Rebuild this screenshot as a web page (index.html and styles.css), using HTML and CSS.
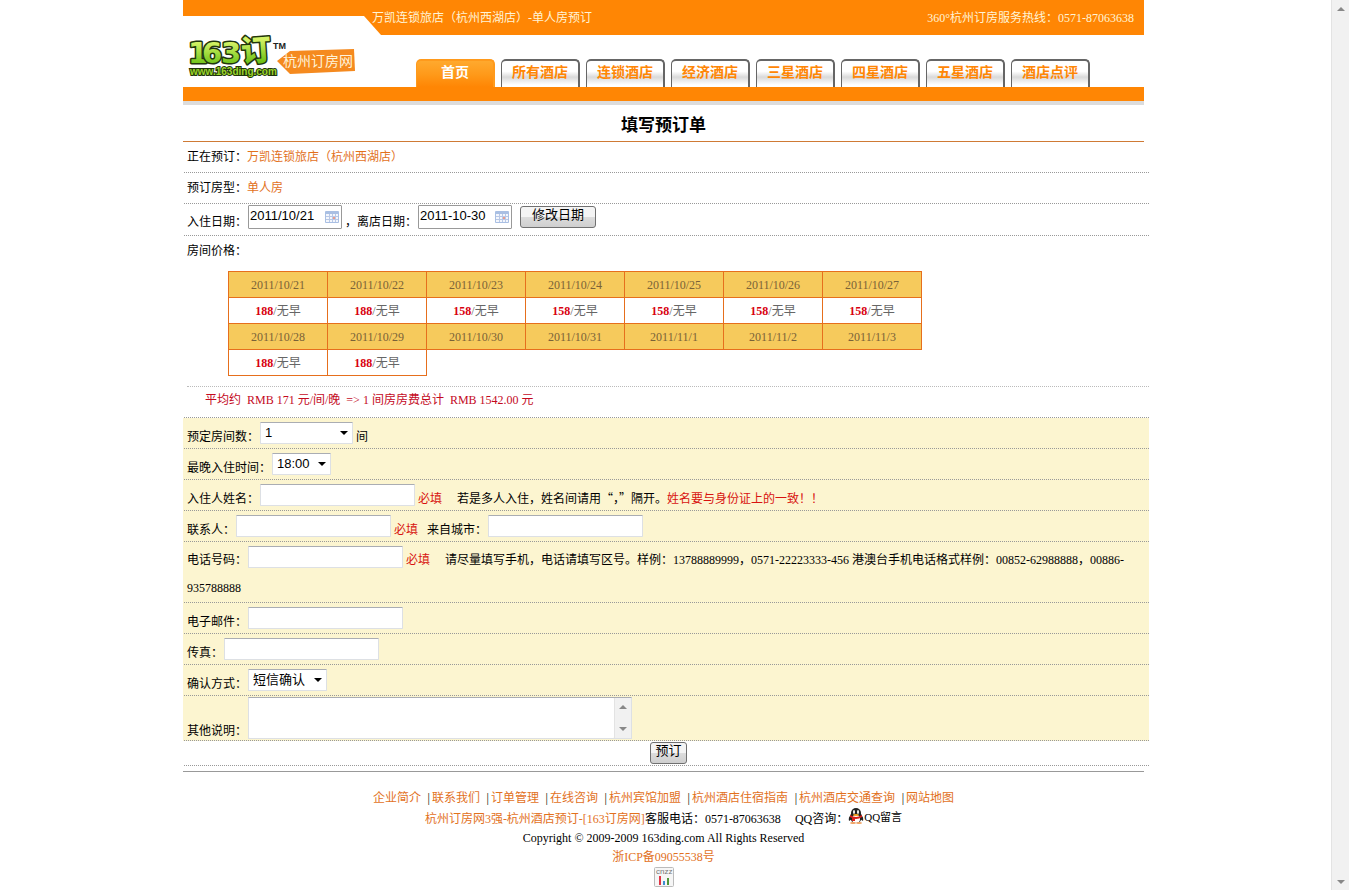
FILE: index.html
```html
<!DOCTYPE html>
<html lang="zh-CN">
<head>
<meta charset="utf-8">
<title>万凯连锁旅店（杭州西湖店）-单人房预订</title>
<link rel="stylesheet" href="styles.css">
</head>
<body>
<div class="viewport">
<div class="page">
  <header>
    <div class="topbar">
      <span class="notch"></span>
      <span class="crumb">万凯连锁旅店（杭州西湖店）-单人房预订</span>
      <span class="hotline">360°杭州订房服务热线：0571-87063638</span>
    </div>
    <div class="brandbar">
      <a class="logo" href="#" aria-label="163订 杭州订房网">
        <svg width="172" height="50" viewBox="0 0 172 50">
          <defs><linearGradient id="leaf" x1="0" y1="0" x2="0" y2="1"><stop offset="0.2" stop-color="#d3f264"/><stop offset="0.9" stop-color="#62bd10"/></linearGradient></defs>
          <g class="logo-main" fill="url(#leaf)" stroke="#22350c" stroke-width="3" paint-order="stroke" stroke-linejoin="round">
            <text x="-2 12 31" y="32" font-size="29">163</text>
            <text x="51" y="30" font-size="30" transform="rotate(-4 66 20)">订</text>
          </g>
          <text class="logo-tm" x="83" y="18">TM</text>
          <text class="logo-url" x="0" y="44">www.163ding.com</text>
          <path d="M87 30L100 20L164 18L165 40L100 43Z" fill="#f58a1f"/>
          <text class="logo-tag" x="93" y="35">杭州订房网</text>
        </svg>
      </a>
      <nav class="tabs">
        <a class="tab active" href="#">首页</a>
        <a class="tab" href="#">所有酒店</a>
        <a class="tab" href="#">连锁酒店</a>
        <a class="tab" href="#">经济酒店</a>
        <a class="tab" href="#">三星酒店</a>
        <a class="tab" href="#">四星酒店</a>
        <a class="tab" href="#">五星酒店</a>
        <a class="tab" href="#">酒店点评</a>
      </nav>
    </div>
    <div class="stripe"></div>
  </header>

  <main>
    <h1>填写预订单</h1>
    <form class="order">
      <div class="row plain">正在预订：<a href="#">万凯连锁旅店（杭州西湖店）</a></div>
      <div class="row plain">预订房型：<a href="#">单人房</a></div>
      <div class="row dates"><label for="in">入住日期：</label><input class="date" id="in" type="text" value="2011/10/21">，<label for="out">离店日期：</label><input class="date" id="out" type="text" value="2011-10-30"><button class="btn change" type="button">修改日期</button></div>
      <div class="row-open">房间价格：</div>
      <div class="prices">
        <table>
          <tr class="days"><td>2011/10/21</td><td>2011/10/22</td><td>2011/10/23</td><td>2011/10/24</td><td>2011/10/25</td><td>2011/10/26</td><td>2011/10/27</td></tr>
          <tr><td><b>188</b>/无早</td><td><b>188</b>/无早</td><td><b>158</b>/无早</td><td><b>158</b>/无早</td><td><b>158</b>/无早</td><td><b>158</b>/无早</td><td><b>158</b>/无早</td></tr>
          <tr class="days"><td>2011/10/28</td><td>2011/10/29</td><td>2011/10/30</td><td>2011/10/31</td><td>2011/11/1</td><td>2011/11/2</td><td>2011/11/3</td></tr>
          <tr><td><b>188</b>/无早</td><td><b>188</b>/无早</td></tr>
        </table>
      </div>
      <div class="row total">平均约&nbsp; RMB 171 元/间/晚&nbsp; =&gt; 1 间房房费总计&nbsp; RMB 1542.00 元</div>

      <div class="fields">
        <div class="row"><label for="rooms">预定房间数：</label><select class="rooms" id="rooms"><option>1</option></select>间</div>
        <div class="row"><label for="late">最晚入住时间：</label><select class="late" id="late"><option>18:00</option></select></div>
        <div class="row"><label for="guest">入住人姓名：</label><input class="text" id="guest" type="text"><em>必填</em><span class="hint">若是多人入住，姓名间请用<span class="quoted">“，”</span>隔开。<em>姓名要与身份证上的一致！！</em></span></div>
        <div class="row"><label for="contact">联系人：</label><input class="text" id="contact" type="text"><em>必填</em><label class="second" for="city">来自城市：</label><input class="text" id="city" type="text"></div>
        <div class="row tall"><label for="phone">电话号码：</label><input class="text" id="phone" type="text"><em>必填</em><span class="hint">请尽量填写手机，电话请填写区号。样例：13788889999，0571-22223333-456 港澳台手机电话格式样例：00852-62988888，00886-935788888</span></div>
        <div class="row"><label for="mail">电子邮件：</label><input class="text" id="mail" type="text"></div>
        <div class="row"><label for="fax">传真：</label><input class="text" id="fax" type="text"></div>
        <div class="row"><label for="confirm">确认方式：</label><select class="confirm" id="confirm"><option>短信确认</option></select></div>
        <div class="row notes"><label for="notes">其他说明：</label><span class="notes-box"><textarea id="notes"></textarea><span class="scroll"><svg width="8" height="4"><path d="M0 4L4 0L8 4Z" fill="#888"/></svg><svg width="8" height="4"><path d="M0 0L4 4L8 0Z" fill="#888"/></svg></span></span></div>
      </div>
      <div class="row submit"><button class="btn" type="submit">预订</button></div>
    </form>
  </main>

  <footer>
    <p class="links"><a href="#">企业简介</a><i>|</i><a href="#">联系我们</a><i>|</i><a href="#">订单管理</a><i>|</i><a href="#">在线咨询</a><i>|</i><a href="#">杭州宾馆加盟</a><i>|</i><a href="#">杭州酒店住宿指南</a><i>|</i><a href="#">杭州酒店交通查询</a><i>|</i><a href="#">网站地图</a></p>
    <p class="service"><a href="#">杭州订房网3强-杭州酒店预订-[163订房网]</a><span>客服电话：0571-87063638</span><span class="qq">QQ咨询：</span><a class="qqlink" href="#"><svg width="16" height="16" viewBox="0 0 16 16"><path d="M3 7Q0 9 1 13L4 11Z" fill="#222"/><path d="M13 7Q16 9 15 13L12 11Z" fill="#222"/><ellipse cx="8" cy="9" rx="6" ry="6" fill="#222"/><ellipse cx="8" cy="5" rx="5" ry="5" fill="#222"/><ellipse cx="8" cy="11" rx="4" ry="4" fill="#fff"/><path d="M2 7Q8 11 14 7V9Q8 13 2 9Z" fill="#d8201c"/><path d="M4 9L7 10V13H4Z" fill="#d8201c"/><ellipse cx="6" cy="4" rx="1" ry="2" fill="#fff"/><ellipse cx="10" cy="4" rx="1" ry="2" fill="#fff"/><ellipse cx="8" cy="7" rx="3" ry="1" fill="#f5a21c"/><ellipse cx="5" cy="15" rx="3" ry="1" fill="#f0a060"/><ellipse cx="11" cy="15" rx="3" ry="1" fill="#f0a060"/></svg>QQ留言</a></p>
    <p>Copyright © 2009-2009 163ding.com All Rights Reserved</p>
    <p><a href="#">浙ICP备09055538号</a></p>
    <a class="cnzz" href="#" aria-label="cnzz"><svg width="20" height="20" viewBox="0 0 20 20"><rect x="0.5" y="0.5" width="19" height="19" rx="1" fill="#f6f6f6" stroke="#bbb"/><text x="2" y="7">cnzz</text><path d="M5 9h2v9h-2z" fill="#e03545"/><path d="M9 14h2v4h-2z" fill="#3f8fd0"/><path d="M13 11h2v7h-2z" fill="#4f9638"/></svg></a>
  </footer>
</div>
</div>
<div class="scroll page-scroll"><svg width="8" height="4"><path d="M0 4L4 0L8 4Z" fill="#888"/></svg><svg width="8" height="4"><path d="M0 0L4 4L8 0Z" fill="#888"/></svg></div>
</body>
</html>
```
FILE: styles.css
```css
* { box-sizing: border-box; }

body {
  display: flex;
  min-height: 100vh;
  margin: 0;
  background: #fff;
  color: #000;
  font: 12px "Liberation Serif", "Noto Sans CJK SC", serif;
}

a { color: #e2711d; text-decoration: none; }
em { color: #d8130f; font-style: normal; }

.viewport { flex: 1; padding-right: 4px; }
.page { max-width: 961px; margin: 0 auto; }

.scroll {
  display: flex;
  flex-direction: column;
  align-items: center;
  justify-content: space-between;
  width: 17px;
  padding: 7px 0;
  border-left: 1px solid #e3e3e3;
  background: #f1f1f1;
}
.page-scroll { width: 18px; }

/* Header */
.topbar {
  display: flex;
  height: 35px;
  background: #ff8604;
  color: #fff4d6;
  line-height: 36px;
}
.notch {
  align-self: flex-end;
  width: 198px;
  height: 19px;
  background: #fff;
  clip-path: polygon(0 0, 181px 0, 100% 100%, 0 100%);
}
.crumb { margin-left: -9px; }
.hotline { margin: 0 10px 0 auto; }

.brandbar { position: relative; display: flex; align-items: flex-end; height: 52px; }
.logo { width: 172px; height: 56px; margin-left: 7px; }
.logo svg { display: block; overflow: visible; }
.logo-main { font-family: "DejaVu Sans", "Noto Sans CJK SC", sans-serif; font-weight: 900; }
.logo-tm { font: bold 9px "Liberation Sans", sans-serif; fill: #222; }
.logo-url {
  font: bold 10px "Liberation Sans", sans-serif;
  fill: #9bd62b;
  stroke: #22350c;
  stroke-width: 2px;
  paint-order: stroke;
}
.logo-tag { font: 14px "Noto Sans CJK SC", sans-serif; fill: #fff3d8; }

.tabs { display: flex; gap: 6px; margin-left: 54px; }
.tab {
  width: 79px;
  height: 28px;
  border: solid #666;
  border-width: 2px 2px 0 1px;
  border-radius: 5px 5px 0 0;
  background: linear-gradient(#fff 40%, #d9d9d9 62%, #fff 92%);
  color: #ff8604;
  font-size: 14px;
  font-weight: bold;
  line-height: 23px;
  text-align: center;
}
.tab.active {
  border-color: #ff9a1c;
  background: linear-gradient(#ffa92e, #ff9a1a 50%, #ff8604);
  color: #fff;
}
.stripe { height: 18px; border-bottom: 4px solid #dcdcdc; background: #ff8604; }

/* Order form */
h1 {
  margin: 0;
  padding-top: 5px;
  border-bottom: 1px solid #cf7a35;
  font-size: 17px;
  line-height: 31px;
  text-align: center;
}
.order { margin: 0 -5px 0 1px; }
.row {
  padding: 8px 0 0 3px;
  border-bottom: 1px dotted #999;
  line-height: 22px;
}
.row.plain { padding-top: 0; line-height: 30px; }
.row.dates { padding-top: 5px; line-height: 26px; }
.row-open { padding-left: 3px; line-height: 30px; }
.row.total { padding: 0 0 4px 21px; color: #c40a1e; line-height: 26px; }

.prices { margin-left: 3px; padding: 5px 0 10px 41px; border-bottom: 1px dotted #bbb; }
table { border-collapse: collapse; color: #666; }
td {
  width: 99px;
  height: 26px;
  padding: 1px 0 0;
  border: 1px solid #e66f1d;
  line-height: 24px;
  text-align: center;
}
td b { color: #d8000f; }
.days { background: #f6ca5c; color: #7a6238; }

.fields { margin-left: -1px; padding-left: 1px; background: #fcf5d0; }

input, select, textarea {
  margin: -4px 3px 0 1px;
  border: 1px solid #dde0e4;
  border-top-color: #aaadb3;
  border-radius: 1px;
  background-color: #fff;
  color: #000;
  font: 13px "Liberation Sans", "Noto Sans CJK SC", sans-serif;
  vertical-align: top;
}
.row.tall { padding-top: 4px; line-height: 28px; }
.row.tall input { margin-top: 0; }
.text { width: 155px; height: 22px; }
.date {
  width: 94px;
  height: 24px;
  padding: 0 0 3px 1px;
  border-color: #999;
  background: #fff url("data:image/svg+xml,%3Csvg xmlns='http://www.w3.org/2000/svg' width='14' height='12'%3E%3Crect width='14' height='12' rx='1' fill='%23a9bfe3'/%3E%3Cpath d='M1 3h12v8H1z' fill='%23f3f6fc'/%3E%3Cpath d='M1 5.5h12M1 8.5h12M4.5 3v8M7.5 3v8M10.5 3v8' stroke='%23b9c8e6'/%3E%3Cpath d='M8 6h2v2H8z' fill='%23ec9a8a'/%3E%3C/svg%3E") no-repeat right 2px center;
}
select {
  height: 22px;
  padding: 0 4px 1px;
  appearance: none;
  background: #fff url("data:image/svg+xml,%3Csvg xmlns='http://www.w3.org/2000/svg' width='8' height='4'%3E%3Cpath d='M0 0h8L4 4z'/%3E%3C/svg%3E") no-repeat right 4px center;
}
.rooms { width: 93px; }
.late { width: 59px; }
.confirm { width: 79px; }
.hint { margin-left: 15px; }
.quoted { font-family: "Noto Sans CJK SC", sans-serif; line-height: 1; }
.second { margin-left: 9px; }

.row.notes { display: flex; align-items: flex-end; padding-top: 1px; padding-bottom: 1px; }
.notes label { line-height: 16px; }
.notes-box {
  display: flex;
  width: 384px;
  height: 42px;
  margin-left: 1px;
  border: 1px solid #dde0e4;
  border-top-color: #aaadb3;
}
textarea { flex: 1; margin: 0; border: 0; resize: none; }

.btn {
  height: 22px;
  padding: 0 4px 4px;
  border: 1px solid #707070;
  border-radius: 3px;
  background: linear-gradient(#f4f4f4 48%, #dcdcdc 52%, #cfcfcf);
  color: #000;
  font: 13px "Liberation Sans", "Noto Sans CJK SC", sans-serif;
  line-height: 16px;
  vertical-align: top;
}
.btn.change { width: 76px; margin: -3px 0 0 5px; }
.row.submit { padding: 1px 0 1px 4px; text-align: center; }

/* Footer */
footer {
  margin-top: 5px;
  padding-top: 14px;
  border-top: 1px solid #999;
  text-align: center;
}
footer p { margin: 0; line-height: 19px; }
footer .links { line-height: 24px; }
.links i { display: inline-block; width: 11px; padding-right: 2px; font-style: normal; text-align: right; }
.service { display: flex; justify-content: center; }
.qq { margin-left: 14px; }
.qqlink {
  display: flex;
  margin: -2px 0 2px;
  color: #000;
  font-size: 11px;
}
.cnzz { display: inline-block; height: 20px; }
.cnzz svg { display: block; }
.cnzz text { font: 8px "Liberation Sans", sans-serif; fill: #777; }
```
